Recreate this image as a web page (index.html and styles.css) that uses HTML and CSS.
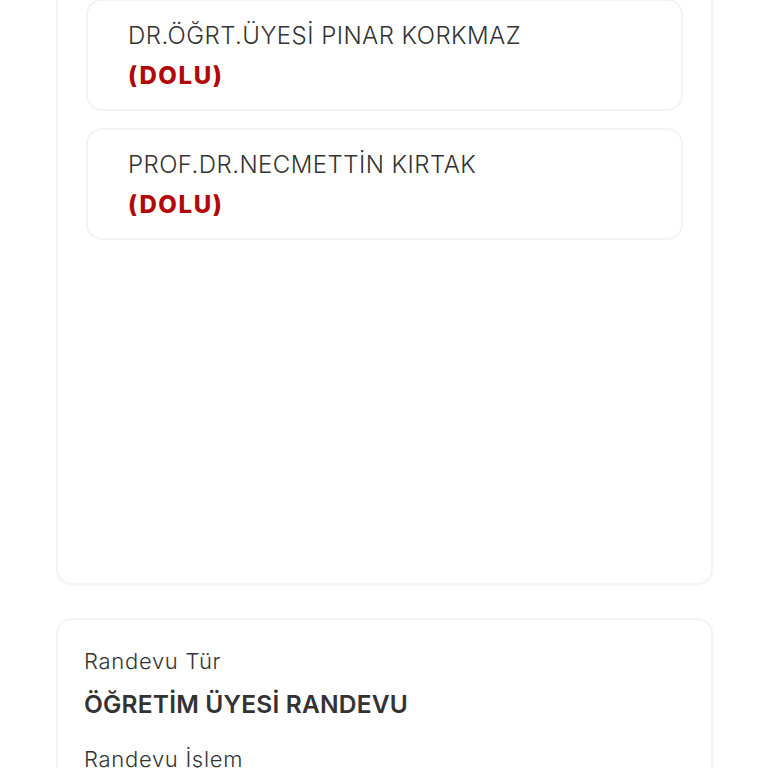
FILE: index.html
```html
<!DOCTYPE html>
<html lang="tr">
<head>
<meta charset="utf-8">
<title>Randevu</title>
<link rel="stylesheet" href="styles.css">
</head>
<body>
<div class="page">
  <section class="panel panel-list">
    <div class="doctor">
      <div class="doctor-name">DR.ÖĞRT.ÜYESİ PINAR KORKMAZ</div>
      <div class="doctor-status">(DOLU)</div>
    </div>
    <div class="doctor">
      <div class="doctor-name">PROF.DR.NECMETTİN KIRTAK</div>
      <div class="doctor-status">(DOLU)</div>
    </div>
  </section>
  <section class="panel panel-info">
    <div class="info-label">Randevu Tür</div>
    <div class="info-value">ÖĞRETİM ÜYESİ RANDEVU</div>
    <div class="info-label info-label-next">Randevu İşlem</div>
  </section>
</div>
</body>
</html>
```
FILE: styles.css
```css
html, body {
  margin: 0;
  padding: 0;
  background: #ffffff;
  overflow: hidden;
}
body {
  font-family: Inter, "Noto Sans", sans-serif;
  color: #333333;
}
.page {
  padding: 0 55px 0 56px;
  display: flex;
  flex-direction: column;
  gap: 33px;
  margin-top: -21px;
}
.panel {
  background: #ffffff;
  border: 2px solid #f3f3f6;
  border-radius: 16px;
  box-shadow: 0 1px 3px rgba(0,0,0,0.03);
}
.panel-list {
  padding: 18px 28px 0 28px;
  height: 606px;
  box-sizing: border-box;
  display: flex;
  flex-direction: column;
  gap: 17px;
}
.doctor {
  border: 2px solid #f3f3f6;
  border-radius: 16px;
  padding: 17px 40px 14px 40px;
  height: 112px;
  box-sizing: border-box;
}
.doctor-name {
  font-size: 24px;
  font-weight: 300;
  line-height: 36px;
  color: #333333;
  letter-spacing: 0.45px;
}
.doctor-status {
  font-size: 24px;
  font-weight: 800;
  line-height: 38px;
  margin-top: 3px;
  color: #b00a0a;
  letter-spacing: 1.6px;
}
.panel-info {
  padding: 26px 26px 40px 26px;
  height: 300px;
}
.info-label {
  font-size: 22px;
  font-weight: 300;
  line-height: 30px;
  color: #333333;
  letter-spacing: 0.7px;
}
.info-value {
  font-size: 24.5px;
  font-weight: 600;
  line-height: 36px;
  margin-top: 10px;
  color: #333333;
  letter-spacing: 0.2px;
}
.info-label-next {
  margin-top: 22px;
}
```
